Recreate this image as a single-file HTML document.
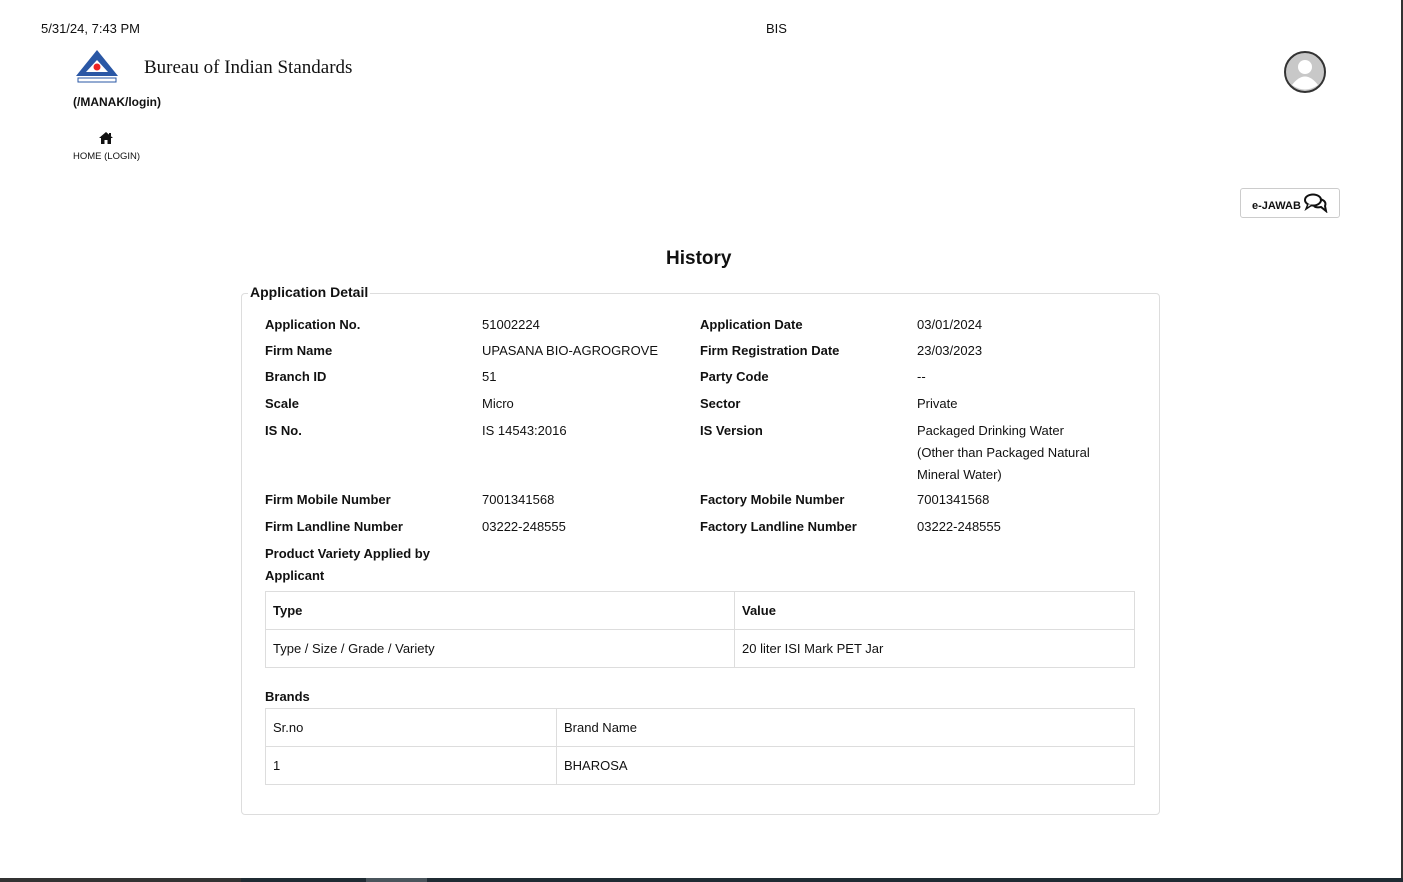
<!DOCTYPE html>
<html><head><style>
body{margin:0;width:1403px;height:882px;position:relative;background:#fff;font-family:"Liberation Sans",sans-serif;color:#111;overflow:hidden}
.a{position:absolute;white-space:nowrap}
.t{font-size:13px}
.b{font-weight:bold}
.tb{position:absolute;border-collapse:collapse;font-size:13px}
.tb td{border:1px solid #ddd;padding:0 7px;height:37px}
</style></head><body>
<div class="a" style="left:41px;top:21px;font-size:13px">5/31/24, 7:43 PM</div>
<div class="a" style="left:766px;top:21px;font-size:13px">BIS</div>
<svg class="a" style="left:74px;top:48px" width="46" height="36" viewBox="0 0 46 36">
<path d="M23 2 L44 28 L2 28 Z" fill="#2a57a5"/><path d="M23 12 L34 24 L12 24 Z" fill="#fff"/>
<circle cx="23" cy="19" r="3.5" fill="#e22"/><rect x="4" y="30" width="38" height="4" fill="#fff" stroke="#2a57a5" stroke-width="1"/></svg>
<div class="a" style="left:144px;top:57px;font-family:'Liberation Serif',serif;font-size:19px">Bureau of Indian Standards</div>
<div class="a b" style="left:73px;top:95px;font-size:12px">(/MANAK/login)</div>
<svg class="a" style="left:99px;top:132px" width="14" height="12" viewBox="0 0 14 12"><path d="M7 0 L14 6 L12 6 L12 12 L8.5 12 L8.5 8 L5.5 8 L5.5 12 L2 12 L2 6 L0 6 Z" fill="#111"/><rect x="10" y="1" width="2" height="3" fill="#111"/></svg>
<div class="a" style="left:73px;top:151px;font-size:9.5px">HOME (LOGIN)</div>
<svg class="a" style="left:1283px;top:50px" width="44" height="44" viewBox="0 0 44 44"><circle cx="22" cy="22" r="20" fill="#c8c8c8" stroke="#333" stroke-width="2"/><circle cx="22" cy="17" r="7" fill="#fff"/><path d="M9 35 Q22 18 35 35 Q22 44 9 35Z" fill="#fff"/></svg>
<div class="a" style="left:1240px;top:188px;width:98px;height:28px;border:1px solid #ccc;border-radius:3px"></div>
<div class="a b" style="left:1252px;top:200px;font-size:11px">e-JAWAB</div>
<svg class="a" style="left:1304px;top:193px" width="24" height="20" viewBox="0 0 24 20"><ellipse cx="9" cy="7" rx="8" ry="5.5" fill="#fff" stroke="#111" stroke-width="2"/><path d="M4 11 L2 16 L8 12" fill="#fff" stroke="#111" stroke-width="1.5"/><path d="M16 6 Q23 8 21 13 L22 18 L17 14 Q12 15 10 13" fill="none" stroke="#111" stroke-width="2"/></svg>
<div class="a b" style="left:666px;top:248px;font-size:19px">History</div>
<div class="a" style="left:241px;top:293px;width:917px;height:520px;border:1px solid #ddd;border-radius:4px"></div>
<div class="a b" style="left:248px;top:284px;background:#fff;padding:0 2px;font-size:14px">Application Detail</div>
<div class="t">
<div class="a b" style="left:265px;top:317px">Application No.</div><div class="a" style="left:482px;top:317px">51002224</div><div class="a b" style="left:700px;top:317px">Application Date</div><div class="a" style="left:917px;top:317px">03/01/2024</div>
<div class="a b" style="left:265px;top:343px">Firm Name</div><div class="a" style="left:482px;top:343px">UPASANA BIO-AGROGROVE</div><div class="a b" style="left:700px;top:343px">Firm Registration Date</div><div class="a" style="left:917px;top:343px">23/03/2023</div>
<div class="a b" style="left:265px;top:369px">Branch ID</div><div class="a" style="left:482px;top:369px">51</div><div class="a b" style="left:700px;top:369px">Party Code</div><div class="a" style="left:917px;top:369px">--</div>
<div class="a b" style="left:265px;top:396px">Scale</div><div class="a" style="left:482px;top:396px">Micro</div><div class="a b" style="left:700px;top:396px">Sector</div><div class="a" style="left:917px;top:396px">Private</div>
<div class="a b" style="left:265px;top:423px">IS No.</div><div class="a" style="left:482px;top:423px">IS 14543:2016</div><div class="a b" style="left:700px;top:423px">IS Version</div><div class="a" style="left:917px;top:420px;line-height:22px">Packaged Drinking Water<br>(Other than Packaged Natural<br>Mineral Water)</div>
<div class="a b" style="left:265px;top:492px">Firm Mobile Number</div><div class="a" style="left:482px;top:492px">7001341568</div><div class="a b" style="left:700px;top:492px">Factory Mobile Number</div><div class="a" style="left:917px;top:492px">7001341568</div>
<div class="a b" style="left:265px;top:519px">Firm Landline Number</div><div class="a" style="left:482px;top:519px">03222-248555</div><div class="a b" style="left:700px;top:519px">Factory Landline Number</div><div class="a" style="left:917px;top:519px">03222-248555</div>
<div class="a b" style="left:265px;top:543px;line-height:22px">Product Variety Applied by<br>Applicant</div>
<div class="a b" style="left:265px;top:689px">Brands</div>
</div>
<table class="tb" style="left:265px;top:591px;width:870px"><tr><td class="b" style="width:454px">Type</td><td class="b">Value</td></tr><tr><td>Type / Size / Grade / Variety</td><td>20 liter ISI Mark PET Jar</td></tr></table>
<table class="tb" style="left:265px;top:708px;width:870px"><tr><td style="width:276px">Sr.no</td><td>Brand Name</td></tr><tr><td>1</td><td>BHAROSA</td></tr></table>
<div class="a" style="left:1401px;top:0;width:2px;height:882px;background:#333"></div>
<div class="a" style="left:0;top:878px;width:241px;height:4px;background:#333"></div>
<div class="a" style="left:241px;top:878px;width:1162px;height:4px;background:#1f2b33"></div>
<div class="a" style="left:366px;top:878px;width:61px;height:4px;background:#4a555c"></div>
</body></html>
